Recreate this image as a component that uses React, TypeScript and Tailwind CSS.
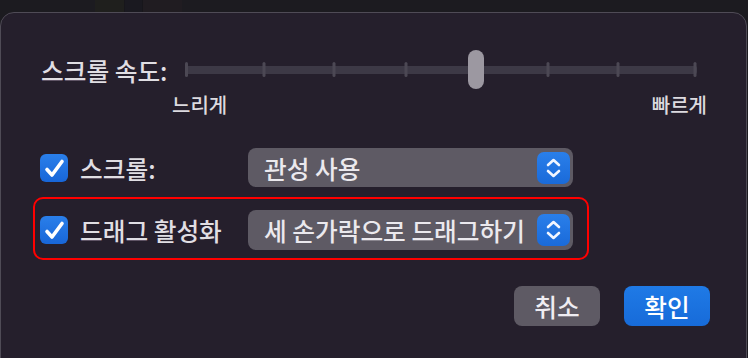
import React from "react";

const font = { fontFamily: '"Noto Sans CJK KR", "Noto Sans", sans-serif' };

function Checkbox() {
  return (
    <div className="w-[28px] h-[28px] rounded-[6px] bg-gradient-to-b from-[#2a7fea] to-[#1866d8] flex items-center justify-center shrink-0">
      <svg width="28" height="28" viewBox="0 0 28 28">
        <path d="M7 15.5 L12 21 L22 7.5" fill="none" stroke="#ffffff" strokeWidth="3.6" strokeLinecap="round" strokeLinejoin="round" />
      </svg>
    </div>
  );
}

function Stepper() {
  return (
    <div className="w-[33px] h-[32px] rounded-[7px] bg-gradient-to-b from-[#2a7fea] to-[#1a6ad9] flex items-center justify-center shrink-0">
      <svg width="33" height="32" viewBox="0 0 33 32">
        <path d="M11 13 L16.5 8 L22 13" fill="none" stroke="#f2f6ff" strokeWidth="2.6" strokeLinecap="round" strokeLinejoin="round" />
        <path d="M11 19 L16.5 24 L22 19" fill="none" stroke="#f2f6ff" strokeWidth="2.6" strokeLinecap="round" strokeLinejoin="round" />
      </svg>
    </div>
  );
}

function Popup({ text, h }: { text: string; h: string }) {
  return (
    <div className={`w-[325px] ${h} rounded-[8px] bg-[#5e5a64] flex items-center justify-between pl-[16px] pr-[3px]`}>
      <span className="text-[24.7px] leading-[28px] font-medium text-[#ebe9ee] whitespace-nowrap">{text}</span>
      <Stepper />
    </div>
  );
}

function Slider() {
  const ticks = [1.5, 79, 149, 221, 363, 433, 510];
  return (
    <svg width="512" height="40" viewBox="0 0 512 40">
      <rect x="0" y="16" width="512" height="8" rx="2" fill="#3d3946" />
      {ticks.map((t) => (
        <rect key={t} x={t - 1.5} y="12" width="3" height="15" rx="1.5" fill="#4c4854" />
      ))}
      <rect x="283" y="0" width="16" height="39" rx="8" fill="#9c98a1" />
    </svg>
  );
}

export default function App() {
  return (
    <div className="w-[748px] h-[358px] bg-[#1c1b20] flex flex-col overflow-hidden" style={font}>
      <div className="h-[12px] flex shrink-0">
        <div className="w-[95px]" />
        <div className="w-[29px] bg-[#1f1f1d]" />
        <div className="w-[1px] bg-[#17161b]" />
        <div className="w-[17px] bg-[#1a1920]" />
        <div className="w-[1px] bg-[#17161b]" />
        <div className="w-[39px] bg-[#201c21]" />
      </div>
      <div className="w-[747px] h-[360px] shrink-0 bg-[#251f2c] border border-[#4f4b56] rounded-[14px] flex flex-col">
        <div className="mt-[37px] h-[40px] flex items-center pl-[40px]">
          <div className="w-[144px] text-[24.7px] leading-[28px] font-medium text-[#e0dee3] whitespace-nowrap">스크롤 속도:</div>
          <Slider />
        </div>
        <div className="mt-[3px] flex justify-between pl-[171px] pr-[39px] text-[20px] leading-[24px] font-medium text-[#dcdadf]">
          <span>느리게</span>
          <span>빠르게</span>
        </div>
        <div className="mt-[31px] h-[39px] flex items-center pl-[39px]">
          <Checkbox />
          <div className="ml-[12px] w-[168px] text-[24.7px] leading-[28px] font-medium text-[#e0dee3]">스크롤:</div>
          <Popup text="관성 사용" h="h-[39px]" />
        </div>
        <div className="mt-[10px] ml-[32px] w-[556px] h-[63px] border-2 border-[#ff0000] rounded-[10px] flex items-center pl-[5px] pt-[3px]">
          <Checkbox />
          <div className="ml-[12px] w-[168px] text-[24.7px] leading-[28px] font-medium text-[#e0dee3] whitespace-nowrap">드래그 활성화</div>
          <Popup text="세 손가락으로 드래그하기" h="h-[40px]" />
        </div>
        <div className="mt-[26px] flex justify-end gap-[24px] pr-[36px]">
          <div className="w-[86px] h-[40px] rounded-[8px] bg-[#5e5a64] flex items-center justify-center text-[24.7px] leading-[28px] font-medium text-[#efedf2]">취소</div>
          <div className="w-[86px] h-[40px] rounded-[8px] bg-gradient-to-b from-[#1f7ae6] to-[#176bd9] flex items-center justify-center text-[24.7px] leading-[28px] font-medium text-[#ffffff]">확인</div>
        </div>
      </div>
    </div>
  );
}
